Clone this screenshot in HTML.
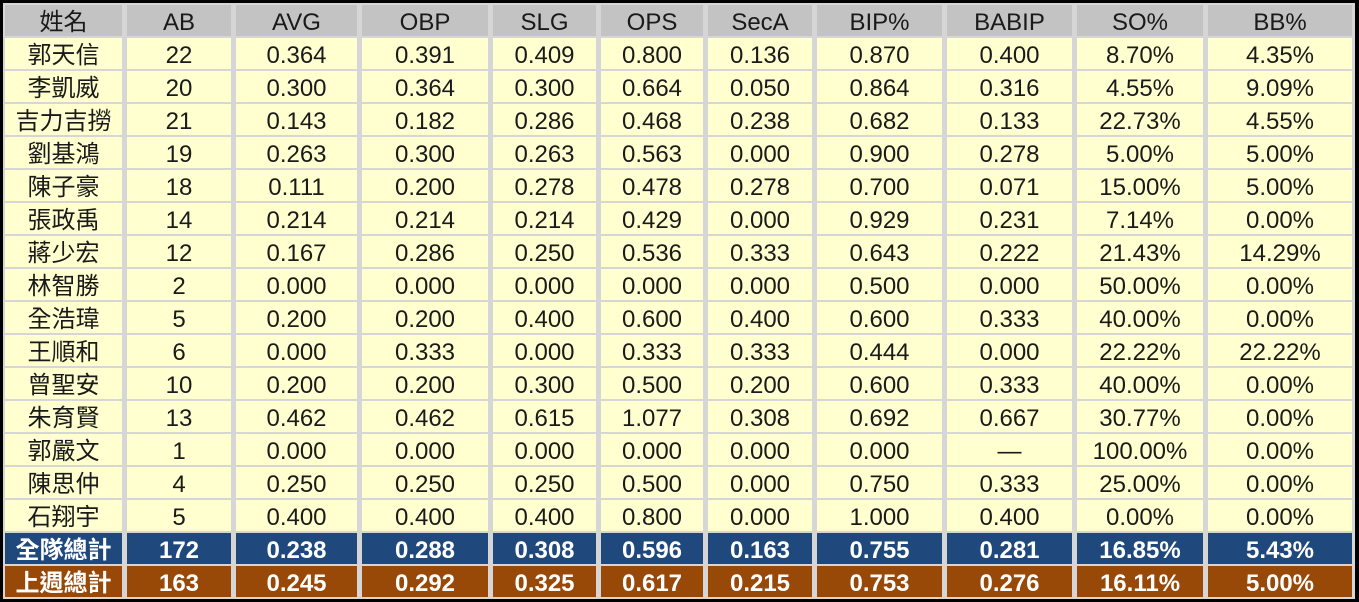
<!DOCTYPE html>
<html><head><meta charset="utf-8"><style>
html,body{margin:0;padding:0;background:#000;}
body{width:1359px;height:602px;overflow:hidden;position:relative;}
.wrap{position:absolute;left:3px;top:3px;width:1352px;height:596px;background:#d6d6d6;}
.g{position:absolute;left:2px;top:2px;display:grid;
grid-template-columns:117px 104px 121px 126px 103px 102px 104px 125px 125px 126px 144px;
grid-auto-rows:31px;column-gap:5px;row-gap:2px;
font-family:"Liberation Sans","Noto Sans CJK TC",sans-serif;font-size:24px;color:#1a1a1a;}
.g div{background:#ffffcf;text-align:center;line-height:35px;white-space:nowrap;overflow:hidden;}
.g .h{background:#c3c3c3;}
.g .b{background:#1f497d;color:#fff;font-weight:bold;}
.g .o{background:#984807;color:#fff;font-weight:bold;}
</style></head><body><div class="wrap"><div class="g">
<div class="h">姓名</div><div class="h">AB</div><div class="h">AVG</div><div class="h">OBP</div><div class="h">SLG</div><div class="h">OPS</div><div class="h">SecA</div><div class="h">BIP%</div><div class="h">BABIP</div><div class="h">SO%</div><div class="h">BB%</div>
<div>郭天信</div><div>22</div><div>0.364</div><div>0.391</div><div>0.409</div><div>0.800</div><div>0.136</div><div>0.870</div><div>0.400</div><div>8.70%</div><div>4.35%</div>
<div>李凱威</div><div>20</div><div>0.300</div><div>0.364</div><div>0.300</div><div>0.664</div><div>0.050</div><div>0.864</div><div>0.316</div><div>4.55%</div><div>9.09%</div>
<div>吉力吉撈</div><div>21</div><div>0.143</div><div>0.182</div><div>0.286</div><div>0.468</div><div>0.238</div><div>0.682</div><div>0.133</div><div>22.73%</div><div>4.55%</div>
<div>劉基鴻</div><div>19</div><div>0.263</div><div>0.300</div><div>0.263</div><div>0.563</div><div>0.000</div><div>0.900</div><div>0.278</div><div>5.00%</div><div>5.00%</div>
<div>陳子豪</div><div>18</div><div>0.111</div><div>0.200</div><div>0.278</div><div>0.478</div><div>0.278</div><div>0.700</div><div>0.071</div><div>15.00%</div><div>5.00%</div>
<div>張政禹</div><div>14</div><div>0.214</div><div>0.214</div><div>0.214</div><div>0.429</div><div>0.000</div><div>0.929</div><div>0.231</div><div>7.14%</div><div>0.00%</div>
<div>蔣少宏</div><div>12</div><div>0.167</div><div>0.286</div><div>0.250</div><div>0.536</div><div>0.333</div><div>0.643</div><div>0.222</div><div>21.43%</div><div>14.29%</div>
<div>林智勝</div><div>2</div><div>0.000</div><div>0.000</div><div>0.000</div><div>0.000</div><div>0.000</div><div>0.500</div><div>0.000</div><div>50.00%</div><div>0.00%</div>
<div>全浩瑋</div><div>5</div><div>0.200</div><div>0.200</div><div>0.400</div><div>0.600</div><div>0.400</div><div>0.600</div><div>0.333</div><div>40.00%</div><div>0.00%</div>
<div>王順和</div><div>6</div><div>0.000</div><div>0.333</div><div>0.000</div><div>0.333</div><div>0.333</div><div>0.444</div><div>0.000</div><div>22.22%</div><div>22.22%</div>
<div>曾聖安</div><div>10</div><div>0.200</div><div>0.200</div><div>0.300</div><div>0.500</div><div>0.200</div><div>0.600</div><div>0.333</div><div>40.00%</div><div>0.00%</div>
<div>朱育賢</div><div>13</div><div>0.462</div><div>0.462</div><div>0.615</div><div>1.077</div><div>0.308</div><div>0.692</div><div>0.667</div><div>30.77%</div><div>0.00%</div>
<div>郭嚴文</div><div>1</div><div>0.000</div><div>0.000</div><div>0.000</div><div>0.000</div><div>0.000</div><div>0.000</div><div>—</div><div>100.00%</div><div>0.00%</div>
<div>陳思仲</div><div>4</div><div>0.250</div><div>0.250</div><div>0.250</div><div>0.500</div><div>0.000</div><div>0.750</div><div>0.333</div><div>25.00%</div><div>0.00%</div>
<div>石翔宇</div><div>5</div><div>0.400</div><div>0.400</div><div>0.400</div><div>0.800</div><div>0.000</div><div>1.000</div><div>0.400</div><div>0.00%</div><div>0.00%</div>
<div class="b">全隊總計</div><div class="b">172</div><div class="b">0.238</div><div class="b">0.288</div><div class="b">0.308</div><div class="b">0.596</div><div class="b">0.163</div><div class="b">0.755</div><div class="b">0.281</div><div class="b">16.85%</div><div class="b">5.43%</div>
<div class="o">上週總計</div><div class="o">163</div><div class="o">0.245</div><div class="o">0.292</div><div class="o">0.325</div><div class="o">0.617</div><div class="o">0.215</div><div class="o">0.753</div><div class="o">0.276</div><div class="o">16.11%</div><div class="o">5.00%</div>
</div></div></body></html>
